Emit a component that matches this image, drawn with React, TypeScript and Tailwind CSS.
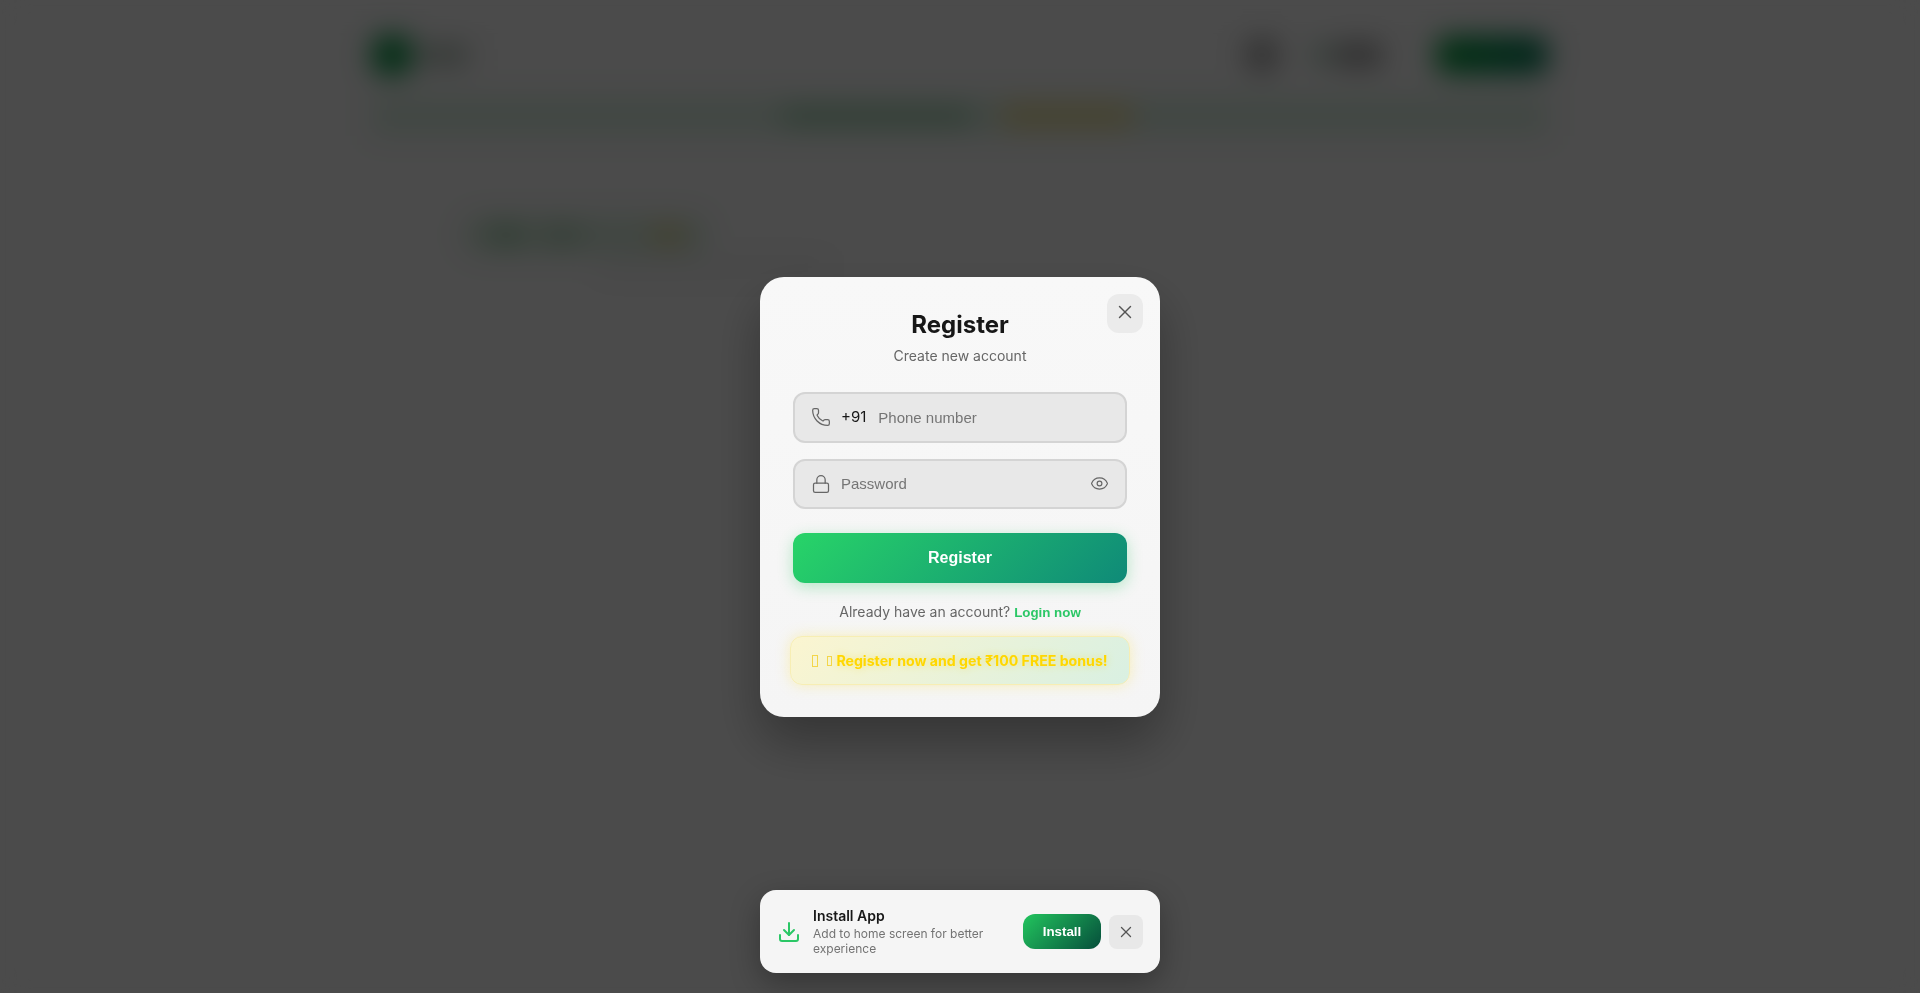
import { Download, Eye, Lock, Phone, X } from 'lucide-react';

function Backdrop() {
  return (
    <div className="mx-auto w-[1176px] pt-[35px]">
      <div className="flex items-center justify-between">
        <div className="flex items-center gap-2">
          <div className="h-10 w-10 rounded-xl bg-[#0d9b4a]" />
          <div className="h-5 w-12 bg-[#aebdb3]" />
        </div>
        <div className="flex items-center">
          <div className="h-9 w-9 rounded-full bg-[#a8a8a8]" />
          <div className="ml-[32px] h-5 w-5 rounded-full bg-[#9cc4ac]" />
          <div className="ml-1 h-6 w-[46px] bg-[#9e9e9e]" />
          <div className="ml-[54px] h-[38px] w-[112px] rounded-xl bg-gradient-to-r from-[#07a13a] to-[#067a5a]" />
        </div>
      </div>
      <div className="mt-[21px] flex h-[40px] items-center bg-[#dcefe2] pl-[410px]">
        <div className="h-4 w-[190px] bg-[#9accaa]" />
        <div className="ml-[30px] h-6 w-[130px] bg-[#efdf9c]" />
      </div>
      <div className="mt-[80px] ml-[90px] flex h-[38px] w-[246px] items-center gap-4 rounded-full bg-[#d8ecdc] px-6">
        <div className="h-5 w-10 rounded-full bg-[#a4d0b0]" />
        <div className="h-5 w-10 rounded-full bg-[#b2d4ba]" />
        <div className="ml-auto h-4 w-8 rounded-full bg-[#e8d488]" />
      </div>
      <div className="mt-[9px] ml-[226px] h-2 w-[230px] bg-[#e4e4e4]" />
    </div>
  );
}

export default function App() {
  return (
    <div className="relative h-[993px] overflow-hidden bg-[#fafafa] font-['Inter',sans-serif]">
      <Backdrop />

      {/* Modal overlay */}
      <div className="absolute inset-0 flex items-center justify-center bg-black/70 backdrop-blur-[14px]">
        <div className="relative h-[440px] w-[400px] rounded-3xl bg-[linear-gradient(#f8f8f8,#f5f5f5)] px-[33px] pt-[32px] shadow-[0_25px_50px_rgba(0,0,0,0.3)]">
          <button className="absolute top-[17px] right-[17px] flex h-[39px] w-9 items-center justify-center rounded-xl bg-[#ebebeb] text-[#555]">
            <X size={22} strokeWidth={1.5} className="-mt-0.5" />
          </button>
          <h2 className="text-center text-2xl leading-8 font-bold text-[#171717]">Register</h2>
          <p className="mt-[5px] text-center text-sm leading-5 text-[#666]">Create new account</p>

          <div className="mt-[26px] flex h-[51px] items-center rounded-xl border-2 border-[#d4d4d4] bg-[#e8e8e8] pl-[15.5px]">
            <Phone size={20} strokeWidth={1.5} className="shrink-0 text-[#666]" />
            <span className="ml-[10.5px] text-[15px] text-[#171717]">+91</span>
            <input
              placeholder="Phone number"
              className="mt-0.5 ml-3 min-w-0 flex-1 bg-transparent font-['Liberation_Sans',sans-serif] text-[15px] outline-none placeholder:text-[#757575]"
            />
          </div>
          <div className="mt-4 flex h-[50px] items-center rounded-xl border-2 border-[#d4d4d4] bg-[#e8e8e8] pr-[16.5px] pl-[15.5px]">
            <Lock size={20} strokeWidth={1.5} className="shrink-0 text-[#666]" />
            <input
              type="password"
              placeholder="Password"
              className="mt-0.5 ml-[10.5px] min-w-0 flex-1 bg-transparent font-['Liberation_Sans',sans-serif] text-[15px] outline-none placeholder:text-[#757575]"
            />
            <Eye size={19} strokeWidth={1.5} className="shrink-0 text-[#666]" />
          </div>

          <button className="mt-6 flex h-[50px] w-full items-center justify-center rounded-xl bg-[linear-gradient(135deg,#28d468,#0f8a78)] font-['Liberation_Sans',sans-serif] text-base font-bold text-white shadow-[0_4px_15px_rgba(34,197,94,0.3)]">
            Register
          </button>

          <p className="mt-[19px] text-center text-sm leading-5 text-[#666]">
            Already have an account?{' '}
            <span className="font-['Liberation_Sans',sans-serif] text-[13.33px] font-bold text-[#2bc766]">Login now</span>
          </p>

          <div className="mt-[13px] -mx-[3px] flex h-[49px] items-center justify-center rounded-xl border border-[#f7eeb4] bg-[linear-gradient(135deg,#fbf5d0,#d9f0e2)] pt-0.5 text-[14.15px] font-bold text-[#ffd700] shadow-[0_0_14px_rgba(253,224,71,0.35)] [text-shadow:0_0_8px_rgba(255,215,0,0.4)]">
            {/* the two missing-glyph boxes in front of the text */}
            <span className="mr-[9px] h-3 w-[6px] border border-[#f3d64a]" />
            <span className="mr-1 h-[10px] w-[5px] border border-[#f3d64a]" />
            <span>Register now and get ₹100 FREE bonus!</span>
          </div>
        </div>
      </div>

      {/* Install prompt */}
      <div className="absolute bottom-5 left-[760px] flex h-[83px] w-[400px] items-center rounded-2xl bg-[#f5f5f5] pr-4 pl-[17px] shadow-[0_10px_30px_rgba(0,0,0,0.3)]">
        <Download size={24} strokeWidth={2} className="shrink-0 text-[#2bc766]" />
        <div className="ml-3 w-[208px]">
          <div className="mb-px text-sm leading-[18px] font-semibold text-[#171717]">Install App</div>
          <div className="text-xs leading-[15px] text-[#737373]">Add to home screen for better experience</div>
        </div>
        <button className="ml-0.5 flex h-[35px] w-[78px] shrink-0 items-center justify-center rounded-xl bg-[linear-gradient(135deg,#22c55e,#064e3b)] font-['Liberation_Sans',sans-serif] text-[13.33px] font-bold text-white">
          Install
        </button>
        <button className="ml-2 flex h-[34px] w-[34px] shrink-0 items-center justify-center rounded-lg bg-[#e8e8e8] text-[#555]">
          <X size={18} strokeWidth={1.75} />
        </button>
      </div>
    </div>
  );
}
